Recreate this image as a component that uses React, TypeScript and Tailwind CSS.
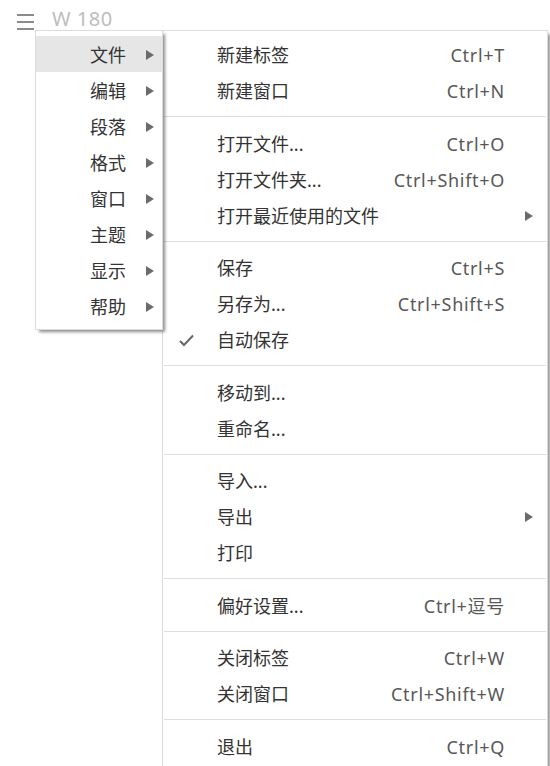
import React from "react";

type Item =
  | { sep: true }
  | { label: string; shortcut?: string; sub?: boolean; checked?: boolean; sep?: false };

const mainItems = ["文件", "编辑", "段落", "格式", "窗口", "主题", "显示", "帮助"];

const fileItems: Item[] = [
  { label: "新建标签", shortcut: "Ctrl+T" },
  { label: "新建窗口", shortcut: "Ctrl+N" },
  { sep: true },
  { label: "打开文件...", shortcut: "Ctrl+O" },
  { label: "打开文件夹...", shortcut: "Ctrl+Shift+O" },
  { label: "打开最近使用的文件", sub: true },
  { sep: true },
  { label: "保存", shortcut: "Ctrl+S" },
  { label: "另存为...", shortcut: "Ctrl+Shift+S" },
  { label: "自动保存", checked: true },
  { sep: true },
  { label: "移动到..." },
  { label: "重命名..." },
  { sep: true },
  { label: "导入..." },
  { label: "导出", sub: true },
  { label: "打印" },
  { sep: true },
  { label: "偏好设置...", shortcut: "Ctrl+逗号" },
  { sep: true },
  { label: "关闭标签", shortcut: "Ctrl+W" },
  { label: "关闭窗口", shortcut: "Ctrl+Shift+W" },
  { sep: true },
  { label: "退出", shortcut: "Ctrl+Q" },
];

const Arrow = () => (
  <svg width="8" height="10" viewBox="0 0 8 10" className="block">
    <path d="M0 0 L8 5 L0 10 Z" fill="#6b6b6b" />
  </svg>
);

const Check = () => (
  <svg width="15" height="13" viewBox="0 0 15 13" className="block">
    <path d="M1 7 L5 11 L14 1.5" fill="none" stroke="#666" strokeWidth="2" />
  </svg>
);

const App = () => {
  return (
    <div
      className="relative w-[550px] h-[766px] overflow-hidden bg-white text-[#333]"
      style={{ fontFamily: '"Noto Sans", "Noto Sans CJK SC", sans-serif' }}
    >
      {/* Top bar */}
      <div className="flex items-start pl-[17px] gap-[18px]">
        <svg width="17" height="16" viewBox="0 0 17 16" className="block mt-[14px]">
          <path d="M0 1 H17 M0 8 H17 M0 15 H17" stroke="#666" strokeWidth="1.6" />
        </svg>
        <span className="mt-[9px] text-[20px] leading-none text-[#bdbdbd] tracking-[0.5px]">W 180</span>
      </div>

      {/* Menus */}
      <div className="absolute top-[30px] left-[35px] flex items-start">
        <div className="w-[128px] bg-white border border-[#dcdcdc] py-[5px] shadow-[3px_3px_3px_-1px_rgba(0,0,0,0.45)] z-10">
          {mainItems.map((m, i) => (
            <div
              key={m}
              className={`flex items-center h-[36px] pt-[2px] pr-[8px] ${i === 0 ? "bg-[#e6e6e6]" : ""}`}
            >
              <span className="flex-1 text-right text-[18px] leading-none text-[#333]">{m}</span>
              <span className="w-[28px] flex justify-end">
                <Arrow />
              </span>
            </div>
          ))}
        </div>
        <div className="-ml-px w-[386px] bg-white border border-[#dcdcdc] py-[5px] shadow-[3px_3px_3px_-1px_rgba(0,0,0,0.45)]">
          {fileItems.map((it, i) =>
            it.sep ? (
              <div key={i} className="pt-[8px] pb-[7.5px] px-[1px]">
                <div className="border-t border-[#dedede]" />
              </div>
            ) : (
              <div key={i} className="flex items-center h-[36px] pt-[2px]">
                <span className="w-[54px] flex pl-[16px]">{it.checked && <Check />}</span>
                <span className="flex-1 text-[18px] leading-none text-[#333]">{it.label}</span>
                {it.shortcut && (
                  <span className="text-[18px] leading-none text-[#585858] tracking-[0.7px] pr-[42px]">
                    {it.shortcut}
                  </span>
                )}
                {it.sub && (
                  <span className="pr-[14px]">
                    <Arrow />
                  </span>
                )}
              </div>
            )
          )}
        </div>
      </div>
    </div>
  );
};

export default App;
